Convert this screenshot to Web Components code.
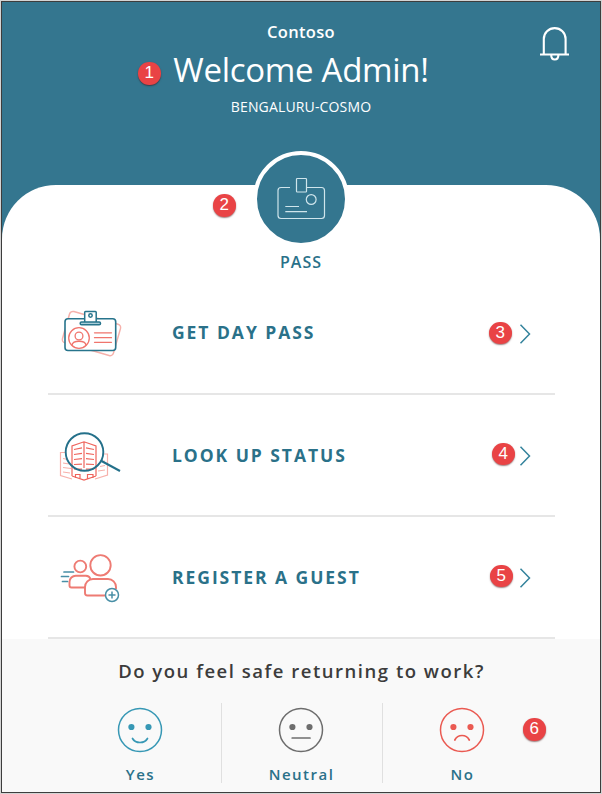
<!DOCTYPE html>
<html lang="en"><head><meta charset="utf-8"><title>Contoso Pass</title>
<style>
html,body{margin:0;background:#d4d4d4}
body{padding:1px;width:600px;height:792px;overflow:hidden;font-family:"Open Sans","Noto Sans",sans-serif}
</style></head><body>
<pass-app></pass-app>
<script>
const define=(name,html,setup)=>customElements.define(name,class extends HTMLElement{
  connectedCallback(){
    if(this.shadowRoot)return;
    const t=document.createElement('template');t.innerHTML=html;
    this.attachShadow({mode:'open'}).append(t.content.cloneNode(true));
    if(setup)setup(this,this.shadowRoot);
  }});

define('step-badge',`<style>
:host{display:flex;align-items:center;justify-content:center;flex:none;width:22.5px;height:22.5px;border-radius:50%;background:#e94345;color:#fff;font:17px/22px "Liberation Sans",Arial,sans-serif;box-shadow:0 1px 1.5px rgba(60,0,0,.5)}
</style><slot></slot>`);

define('app-header',`<style>
:host{display:block;height:271px;text-align:center;color:#fff;position:relative}
.bg{height:182.5px;overflow:hidden}
.org{font-weight:600;font-size:16.5px;line-height:24px;padding-top:18px;letter-spacing:.3px}
h1{font-weight:400;font-size:33px;line-height:46px;margin:3px 0 0;letter-spacing:-.3px}
.site{font-size:14px;line-height:20px;margin-top:4px;letter-spacing:.15px}
.bell{position:absolute;left:537px;top:24px}
.sheet{height:88.5px;background:#fff;border-radius:54px 54px 0 0}
.disc{position:absolute;left:251px;top:149px;width:88px;height:88px;border:4px solid #fff;border-radius:50%;background:#34768f}
.pass{position:absolute;left:0;right:0;top:248px;color:#2a7189;font-weight:600;font-size:16px;line-height:24px;letter-spacing:1px}
step-badge{position:absolute}
.one{left:136px;top:60px}.two{left:211px;top:192px}
</style>
<div class="bg"><div class="org">Contoso</div><h1>Welcome Admin!</h1><div class="site">BENGALURU-COSMO</div></div>
<div class="sheet"></div>
<svg class="bell" width="34" height="38" viewBox="539 26 34 38" fill="none" stroke="#fff" stroke-width="2.100"><path d="M543.800 54V39a10.900 10.900 0 0 1 21.800 0V54M540 54.500H569M551.200 55c0 6 7.200 6 7.200 0"/></svg>
<div class="disc"><svg width="88" height="88" viewBox="257 155 88 88" fill="none" stroke="#cfe5ec" stroke-width="1.200"><path d="M290 187.500H281a3 3 0 0 0-3 3V215.500a3 3 0 0 0 3 3H321.500a3 3 0 0 0 3-3V190.500a3 3 0 0 0-3-3H307"/><rect x="296.500" y="178.500" width="10" height="13.500" rx=".8"/><circle cx="311.200" cy="199.500" r="4.900"/><path d="M285.300 206.500H299M285.300 211.700H307"/></svg></div>
<div class="pass">PASS</div>
<step-badge class="one">1</step-badge><step-badge class="two">2</step-badge>`);

define('menu-item',`<style>
:host{display:flex;align-items:center;box-sizing:border-box;height:122px;margin:0 45px 0 46px;border-bottom:2px solid #e6e6e6}
.icon{width:90px;height:65px;flex:none;margin:var(--icon-drop,0) 0 var(--icon-lift,0) 2px}
.label{flex:1;padding-left:32px;color:#2a7189;font-weight:700;font-size:17.5px;line-height:26px;letter-spacing:1.95px;white-space:nowrap;padding-bottom:var(--label-lift,0)}
.end{display:flex;align-items:center;padding-right:24px;gap:var(--gap,8px)}
.end ::slotted(step-badge){margin-bottom:var(--badge-lift,0)}
.end svg{margin-top:1px}
</style><div class="icon"><slot name="icon"></slot></div><div class="label"><slot></slot></div>
<div class="end"><slot name="badge"></slot><svg width="12" height="20" fill="none" stroke="#34839c" stroke-width="1.500"><path d="M1.500 .8L10.500 10L1.500 19.200"/></svg></div>`);

define('day-pass-icon',`<style>:host,svg{display:block}</style><svg width="90" height="65" viewBox="0 0 90 65" fill="none" stroke-linecap="round">
<rect x="15" y="17.300" width="53" height="32.500" rx="3.500" transform="rotate(16 41.500 33.500)" stroke="#f6b1ab" stroke-width="1.500"/>
<rect x="15" y="18.700" width="50.700" height="31.800" rx="3" fill="#fff" stroke="#27748c" stroke-width="1.600"/>
<g stroke="#f0756d" stroke-width="1.300"><circle cx="29" cy="38" r="10.300"/><circle cx="29" cy="36" r="3.900"/><path d="M22 45c1-5 13-5 14 0M44.500 32.800H61.500M44.500 37.700H61.500M44.500 42.300H61.500"/></g>
<g stroke="#27748c" stroke-width="1.500" fill="#fff"><rect x="34.700" y="11.500" width="11.500" height="11.500" rx=".8"/><circle cx="40.500" cy="15.500" r="1.700"/><rect x="30.200" y="22" width="20.300" height="2.800" rx="1.300" fill="#a9cdd8"/></g></svg>`);

define('lookup-icon',`<style>:host,svg{display:block}</style><svg width="90" height="65" viewBox="0 0 90 65" fill="none">
<g stroke="#f7b0aa" stroke-width="1.200"><path d="M15 27.500H10.500V50.500L22 54M54 29H57.500V50L45 54M13 33.500l5 1M13 38l6 1M13 42.500l8 1M13 47l7 1M50 37l5-1M50 41.500l5-1M48 46l7-1"/></g>
<g stroke="#ef655d" stroke-width="1.200"><path d="M22 51V21L34 16.800L46 21V51M34 17V43M22 51L34 55L46 51M25.500 53V49.500H30V54M37.500 54V49.500H43V53"/><path d="M24 24.500l8-1.700M24 29.500l8-1.200M24 34.500l8-.8M24 39.500l8-.3M24 44l8 .2M36 22.800l8 1.700M36 28.300l8 1.200M36 33.700l8 .8M36 39.200l8 .3M36 44.200l8-.2"/></g>
<circle cx="34.500" cy="27" r="18.800" stroke="#24708a" stroke-width="1.900"/><path d="M51.500 36L70 46" stroke="#24708a" stroke-width="2"/></svg>`);

define('guest-icon',`<style>:host,svg{display:block}</style><svg width="90" height="65" viewBox="0 0 90 65" fill="none" stroke="#ee7b73" stroke-width="1.900">
<circle cx="30.300" cy="21.500" r="5.900"/><path d="M35.500 42.500H21.500a2 2 0 0 1-2-2V37a6.300 6.300 0 0 1 6.300-6.300H36a5 5 0 0 1 4.500 3.300"/>
<circle cx="50.500" cy="20.300" r="10.200"/><path d="M56 50.500H37.500a2.500 2.500 0 0 1-2.500-2.500V42a8 8 0 0 1 8-8H58a8 8 0 0 1 8 8V44"/>
<g stroke="#488fa6"><path d="M14 27H23.500M11.500 31.500H18.500M12.500 36.500H17.500" stroke-width="1.700" stroke-linecap="round"/><circle cx="62" cy="50" r="6.500" fill="#fff" stroke-width="1.500"/><path d="M58.500 50H65.500M62 46.500V53.500" stroke-width="1.500"/></g></svg>`);

define('mood-choice',`<style>
:host{display:flex;flex-direction:column;align-items:center;flex:1;height:80px;color:#2a7189;font-weight:600;font-size:15px;line-height:22px;letter-spacing:1.5px}
svg{flex:none;margin:3.500px 1px 0 0;display:block}.label{flex:none;margin-top:10.500px}
</style><svg width="46" height="46" viewBox="0 0 46 46" fill="none" stroke="currentColor" stroke-width="1.500"><circle cx="23" cy="23" r="21.500"/><circle cx="14.400" cy="20" r="3.100" fill="currentColor" stroke="none"/><circle cx="31.500" cy="20" r="3.100" fill="currentColor" stroke="none"/><path class="mouth" stroke-width="1.700" stroke-linecap="round"/></svg><div class="label"><slot></slot></div>`,
(el,root)=>{
  const [c,d]={happy:['#3798b5','M15.500 31.500c3 5.300 12 5.300 15 0'],neutral:['#6d6d6d','M14.200 31H32'],sad:['#ea5a52','M15.800 33c3-6 11.500-6 14.500 0']}[el.getAttribute('mood')];
  root.querySelector('svg').style.color=c;root.querySelector('.mouth').setAttribute('d',d);
});

define('safety-poll',`<style>
:host{display:block;position:relative;height:155px;background:#f9f9f9}
.q{text-align:center;color:#3c3c3c;font-size:18.500px;line-height:28px;padding-top:18px;font-weight:600;letter-spacing:1.52px;text-indent:1px;white-space:nowrap}
.row{display:flex;margin:18px 57.500px 0 58.500px;height:80px}
mood-choice+mood-choice{border-left:1.500px solid #e0e0e0}
step-badge{position:absolute;left:521px;top:79px}
</style><div class="q">Do you feel safe returning to work?</div>
<div class="row"><mood-choice mood="happy">Yes</mood-choice><mood-choice mood="neutral">Neutral</mood-choice><mood-choice mood="sad">No</mood-choice></div>
<step-badge>6</step-badge>`);

define('pass-app',`<style>
:host{display:block;box-sizing:border-box;width:600px;height:792px;border:1px solid #3d3d3d;background:linear-gradient(#34768f 240px,#fff 240px);overflow:hidden}
main{background:#fff;display:block}
menu-item:nth-child(1){--gap:7.5px;--label-lift:2px;--icon-lift:2px}
menu-item:nth-child(2){--gap:4.5px;--icon-drop:4px;--badge-lift:2px}
menu-item:nth-child(3){--gap:6.5px;--icon-drop:1px;--badge-lift:2px}
</style><app-header></app-header>
<main>
<menu-item><day-pass-icon slot="icon"></day-pass-icon>GET DAY PASS<step-badge slot="badge">3</step-badge></menu-item>
<menu-item><lookup-icon slot="icon"></lookup-icon>LOOK UP STATUS<step-badge slot="badge">4</step-badge></menu-item>
<menu-item><guest-icon slot="icon"></guest-icon>REGISTER A GUEST<step-badge slot="badge">5</step-badge></menu-item>
</main><safety-poll></safety-poll>`);
</script></body></html>
